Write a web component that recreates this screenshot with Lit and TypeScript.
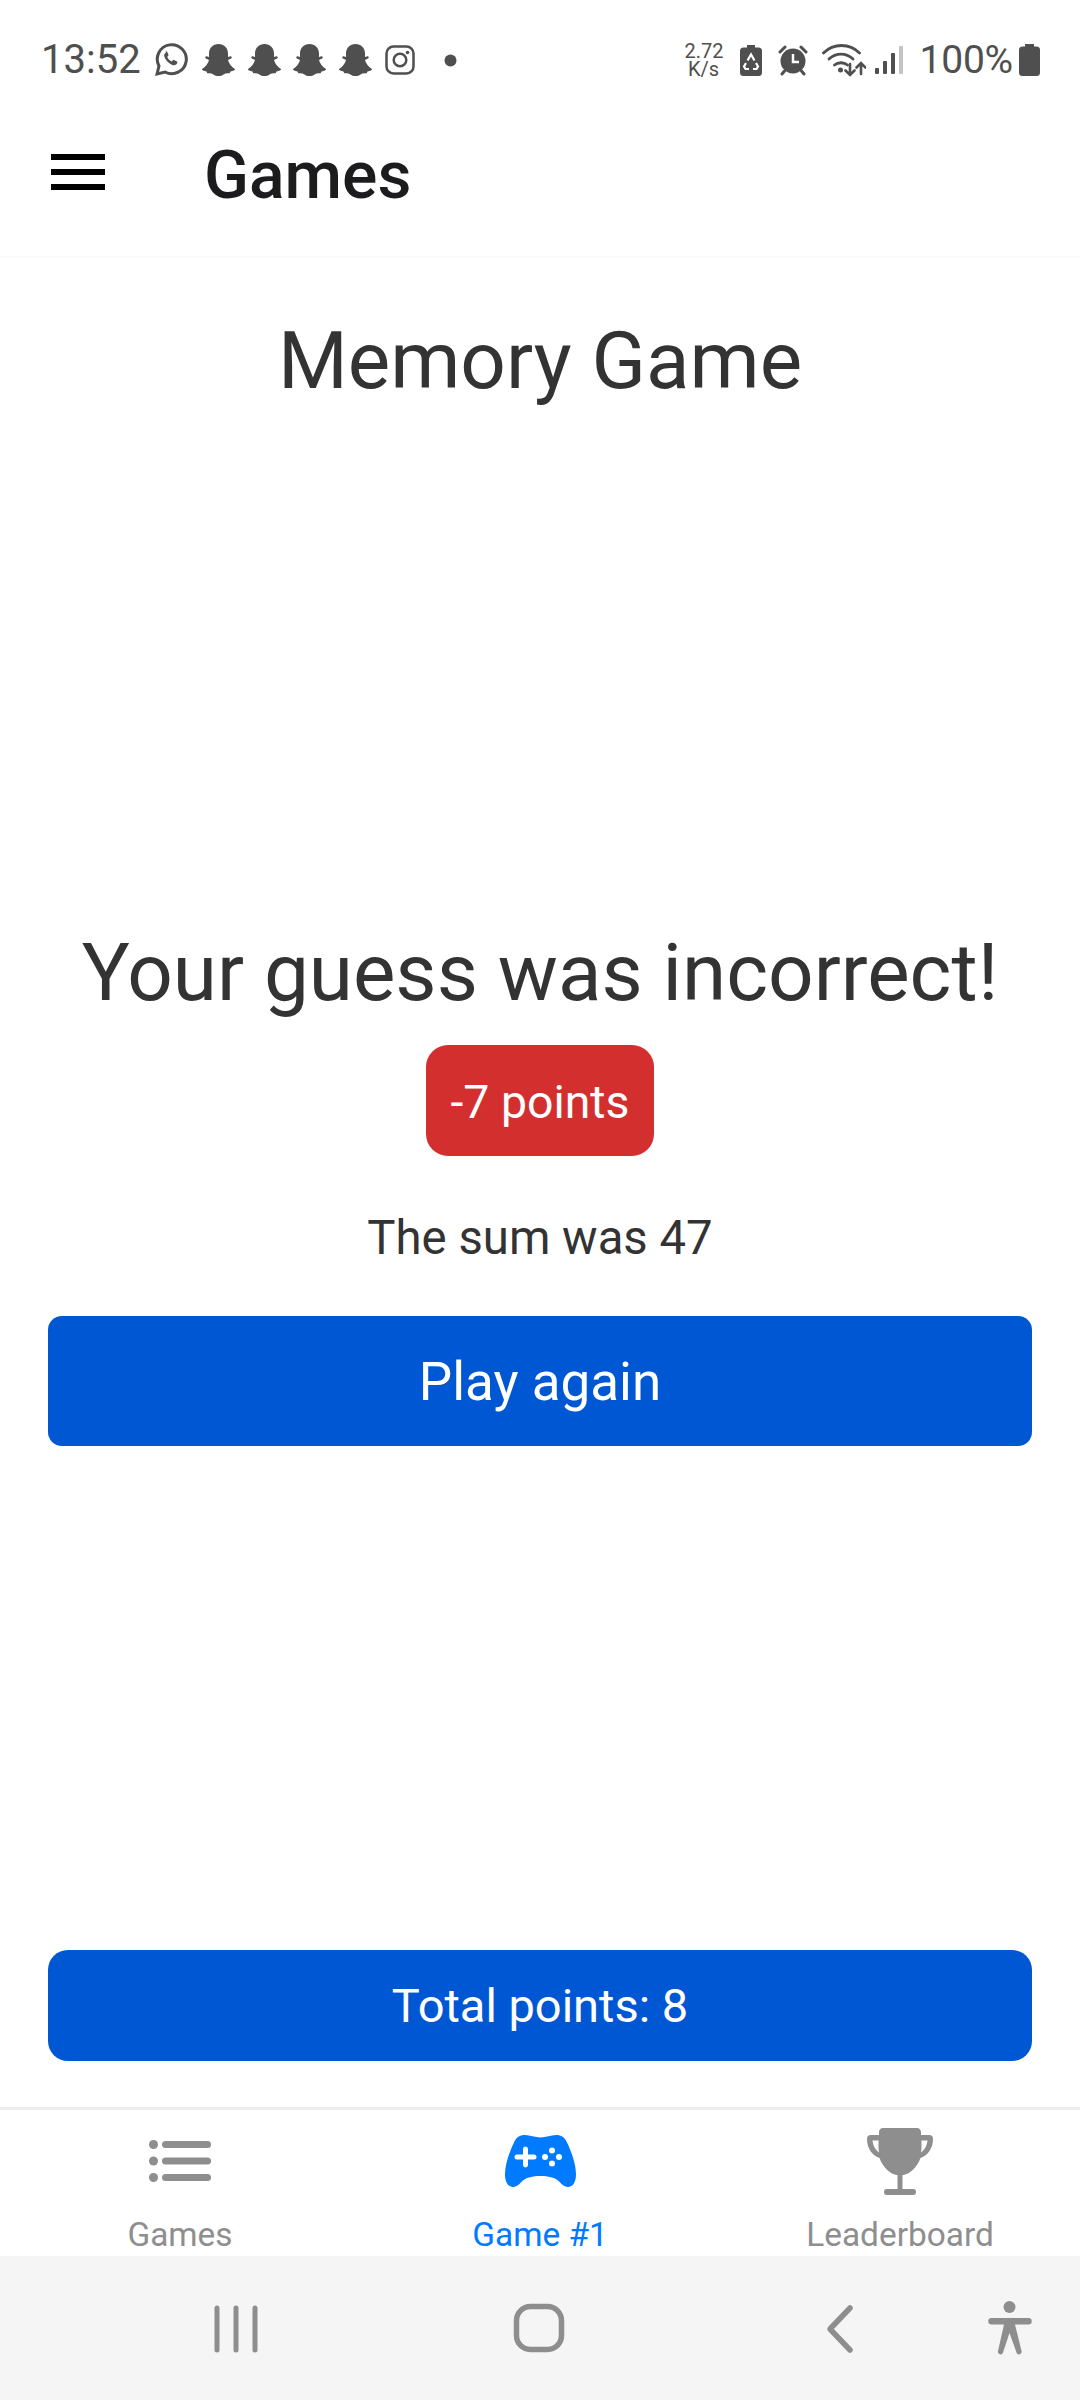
import { LitElement, html, css, svg } from 'lit'
import { customElement } from 'lit/decorators.js'

const ghost = svg`<path d="M16.500 0c5.500 0 9.500 4 9.500 9.500V13l2.500-.8c1.200 0 1.800 1.600.6 2.300L26 16c.8 3.500 3.500 7 7 9 .3.800-.5 1.500-4.500 2.500-.5 1.500-1 2-2 1.800-1.500-.2-3.500.2-5 1.200-1.700 1.100-2.500 1.500-5 1.500s-3.300-.4-5-1.500c-1.500-1-3.500-1.400-5-1.200-1 .2-1.500-.3-2-1.800C.5 26.500-.3 25.800 0 25c3.500-2 6.200-5.500 7-9l-3.100-1.500c-1.200-.7-.6-2.300.6-2.300L7 13V9.500C7 4 11 0 16.500 0z"/>`

@customElement('status-bar')
class StatusBar extends LitElement {
  static styles = css`
    :host {
      display: flex;
      align-items: center;
      height: 120px;
      padding: 0 40px 0 41px;
      color: #4f4f4f;
      font-family: Roboto, sans-serif;
    }
    svg { display: block; flex: none; fill: #4f4f4f; }
    .time { font-size: 40px; line-height: 80px; width: 99px; margin-right: 14px; white-space: nowrap; }
    .ghost { margin-right: 12.500px; }
    .speed { font-size: 20px; line-height: 18px; width: 38px; text-align: center; margin-left: auto; margin-right: 18px; }
    .pct { font-size: 39px; line-height: 80px; margin-right: 6px; letter-spacing: -.2px; }
  `
  render() {
    return html`
      <span class="time">13:52</span>
      <svg width="34" height="34" viewBox="0 0 34 34" style="margin-right:14px">
        <path fill="none" stroke="#4f4f4f" stroke-width="3" d="M3 31l2-8A14.500 14.500 0 1 1 11 29z"/>
        <path d="M12 9.500c-1.500.8-2.200 2.600-1.500 4.600 1.300 3.500 4.300 6.500 7.800 7.800 2 .6 3.900 0 4.700-1.500.5-.9.400-1.700 0-2l-3-1.500c-.5-.2-.9 0-1.200.4l-1 1.200c-2-.8-3.700-2.500-4.600-4.500l1-1.200c.3-.4.400-.7.200-1.200l-1.300-2.800c-.3-.5-1-.7-1.500-.3z"/>
      </svg>
      ${[0, 1, 2, 3].map(() => html`<svg class="ghost" width="33" height="33" viewBox="0 0 33 33">${ghost}</svg>`)}
      <svg width="30" height="30" viewBox="0 0 30 30" style="margin-left:1px">
        <rect x="1.500" y="1.500" width="27" height="27" rx="7" fill="none" stroke="#4f4f4f" stroke-width="2.500"/>
        <circle cx="15" cy="15" r="6.300" fill="none" stroke="#4f4f4f" stroke-width="2.500"/>
        <circle cx="22.500" cy="7.500" r="1.800"/>
      </svg>
      <svg width="13" height="13" viewBox="0 0 13 13" style="margin-left:29px"><circle cx="6.500" cy="6.500" r="6"/></svg>
      <span class="speed">2.72<br>K/s</span>
      <svg width="22" height="31" viewBox="0 0 22 31" style="margin-right:16px">
        <path d="M7 0h8v2.500h3.500A3.500 3.500 0 0 1 22 6v21.500a3.500 3.500 0 0 1-3.500 3.500h-15A3.500 3.500 0 0 1 0 27.500V6a3.500 3.500 0 0 1 3.500-3.500H7z"/>
        <path fill="none" stroke="#fff" stroke-width="2.200" d="M7.500 15.500l3.500-6 3.500 6M6 18l-2 3.500 1.500 2.500H9M16 18l2 3.500-1.500 2.500H13"/>
      </svg>
      <svg width="30" height="32" viewBox="0 0 30 32" style="margin-right:14px">
        <circle cx="15" cy="17" r="12.500"/>
        <path fill="none" stroke="#4f4f4f" stroke-width="3" stroke-linecap="round" d="M2 8l5-5M28 8l-5-5M6.500 27l-2.500 3M23.500 27l2.500 3"/>
        <path fill="none" stroke="#fff" stroke-width="2.500" d="M15 10v8h6"/>
      </svg>
      <svg width="44" height="35" viewBox="0 0 44 35" style="margin-right:9px">
        <g fill="none" stroke="#4f4f4f" stroke-width="2.800" stroke-linecap="round">
          <path d="M1.500 10c10-10 26-10 36 0"/>
          <path d="M7 16c7-6.500 17-6.500 24 0"/>
          <path d="M12.500 22c3.500-3 9.500-3 13 0"/>
          <path d="M28 21v11M23.500 27.500l4.500 4.500 4.500-4.500M39 31V20M34.500 24.500l4.500-4.500 4.500 4.500" stroke-width="2.600"/>
        </g>
        <circle cx="18.500" cy="27" r="2.500"/>
      </svg>
      <svg width="28" height="28" viewBox="0 0 28 28" style="margin-right:16px">
        <rect x="0" y="22" width="4" height="6" rx="1"/>
        <rect x="8" y="15" width="4" height="13" rx="1"/>
        <rect x="16" y="7" width="4" height="21" rx="1"/>
        <rect x="24" y="0" width="4" height="28" rx="1" fill="#c4c4c4"/>
      </svg>
      <span class="pct">100%</span>
      <svg width="21" height="32" viewBox="0 0 21 32">
        <path d="M6 0h9v2.500h2.500A3.500 3.500 0 0 1 21 6v22.500a3.500 3.500 0 0 1-3.500 3.500h-14A3.500 3.500 0 0 1 0 28.500V6a3.500 3.500 0 0 1 3.500-3.500H6z"/>
      </svg>
    `
  }
}

@customElement('app-header')
class AppHeader extends LitElement {
  static styles = css`
    :host {
      display: flex;
      align-items: center;
      height: 138px;
      padding-left: 51px;
      box-sizing: border-box;
      border-bottom: 2px solid #fafafa;
    }
    .burger { display: flex; flex-direction: column; gap: 9px; width: 54px; margin-right: 99px; margin-top: -32px; }
    .burger i { display: block; height: 6px; background: #000; }
    .title { font: 500 66px/76px Roboto, sans-serif; color: #1c1c1e; margin-top: -24px; }
  `
  render() {
    return html`
      <div class="burger"><i></i><i></i><i></i></div>
      <div class="title">Games</div>
    `
  }
}

@customElement('game-screen')
class GameScreen extends LitElement {
  static styles = css`
    :host {
      display: flex;
      flex-direction: column;
      flex: 1;
      padding: 0 48px;
      font-family: Roboto, sans-serif;
      color: #333;
      text-align: center;
    }
    h1 { margin: 58px 0 0; font-size: 80px; line-height: 90px; font-weight: 400; }
    h2 { margin: 520px 0 0; font-size: 80px; line-height: 94px; font-weight: 400; white-space: nowrap; }
    .badge {
      align-self: center;
      margin-top: 25px;
      width: 228px;
      height: 111px;
      border-radius: 22px;
      background: #d32f2f;
      color: #fff;
      font-size: 46.400px;
      line-height: 115px;
    }
    .sum { margin-top: 54px; font-size: 47.300px; line-height: 56px; }
    .btn {
      border-radius: 14px;
      background: #0057d4;
      color: #fff;
    }
    .again { margin-top: 50px; height: 130px; font-size: 53px; line-height: 132px; }
    .total { margin-top: auto; margin-bottom: 46px; height: 111px; font-size: 47px; line-height: 111px; border-radius: 20px; }
  `
  render() {
    return html`
      <h1>Memory Game</h1>
      <h2>Your guess was incorrect!</h2>
      <div class="badge">-7 points</div>
      <div class="sum">The sum was 47</div>
      <div class="btn again">Play again</div>
      <div class="btn total">Total points: 8</div>
    `
  }
}

@customElement('tab-bar')
class TabBar extends LitElement {
  static styles = css`
    :host {
      display: grid;
      grid-template-columns: repeat(3, 1fr);
      height: 149px;
      box-sizing: border-box;
      border-top: 3px solid #ececec;
      font: 400 33.400px/38px Roboto, sans-serif;
      color: #8e8e8f;
      text-align: center;
    }
    .tab { display: flex; flex-direction: column; align-items: center; }
    .icon { height: 90px; display: flex; align-items: center; justify-content: center; margin-top: 6px; margin-bottom: 10px; }
    .active { color: #007aff; }
    svg { display: block; }
  `
  render() {
    return html`
      <div class="tab">
        <div class="icon">
          <svg width="62" height="42" viewBox="0 0 62 42" fill="#8e8e8f">
            <circle cx="4.500" cy="4.500" r="4.500"/><circle cx="4.500" cy="21" r="4.500"/><circle cx="4.500" cy="37.500" r="4.500"/>
            <rect x="13" y="1" width="49" height="7" rx="3.500"/><rect x="13" y="17.500" width="49" height="7" rx="3.500"/><rect x="13" y="34" width="49" height="7" rx="3.500"/>
          </svg>
        </div>
        <span>Games</span>
      </div>
      <div class="tab active">
        <div class="icon">
          <svg width="71" height="52" viewBox="0 0 71 52">
            <path fill="#007aff" d="M20 0c5 0 10 2.500 15.500 2.500S46 0 51 0c5.500 0 8.500 2 11 7.500 4 8.500 9 21 9 32 0 7-3 12.500-8 12.500-4.500 0-7-4-10-6.500-3.500-3-9.500-4.500-17.500-4.500S21.500 42.500 18 45.500C15 48 12.500 52 8 52c-5 0-8-5.500-8-12.500C0 28.500 5 16 9 7.500 11.500 2 14.500 0 20 0z"/>
            <path fill="#fff" d="M18 14a2.500 2.500 0 0 1 5 0v5.500h6a2.500 2.500 0 0 1 0 5h-6V30a2.500 2.500 0 0 1-5 0v-5.500h-6a2.500 2.500 0 0 1 0-5h6z"/>
            <circle fill="#fff" cx="47" cy="15.500" r="3"/><circle fill="#fff" cx="47" cy="28.500" r="3"/><circle fill="#fff" cx="40" cy="22" r="3"/><circle fill="#fff" cx="54" cy="22" r="3"/>
          </svg>
        </div>
        <span>Game #1</span>
      </div>
      <div class="tab">
        <div class="icon">
          <svg width="66" height="67" viewBox="0 0 66 67">
            <path fill="#8e8e8f" fill-rule="evenodd" d="M16 0h34c2.300 0 4 1.700 4 4v3h8a4 4 0 0 1 4 4c0 9-5 16.500-12.500 19C50 39.500 43 46 35.500 47.300V61H46a3 3 0 0 1 0 6H20a3 3 0 0 1 0-6h10.500V47.300C23 46 16 39.500 12.500 30 5 27.500 0 20 0 11a4 4 0 0 1 4-4h8V4c0-2.300 1.700-4 4-4zM5.500 12.500c.5 5 2.800 9.500 6.500 12-.3-2-.5-4-.5-6v-6zm55 0h-6v6c0 2-.2 4-.5 6 3.700-2.500 6-7 6.500-12z"/>
          </svg>
        </div>
        <span>Leaderboard</span>
      </div>
    `
  }
}

@customElement('nav-bar')
class NavBar extends LitElement {
  static styles = css`
    :host { display: block; height: 144px; background: #f5f5f5; }
    svg { display: block; }
  `
  render() {
    return html`
      <svg width="1080" height="144" viewBox="0 0 1080 144" fill="none" stroke="#8e8e8f" stroke-linecap="round" stroke-linejoin="round">
        <path stroke-width="5" d="M217 52v42M236 52v42M255 52v42"/>
        <rect x="516.500" y="50.500" width="45" height="43" rx="14" stroke-width="5.500"/>
        <path stroke-width="5.500" d="M850 52l-20 21 20 21"/>
        <circle cx="1009.500" cy="51" r="6" fill="#8e8e8f" stroke="none"/>
        <path fill="#8e8e8f" stroke="none" d="M991.500 62h37a3.250 3.250 0 0 1 0 6.500H1015l6.500 26.500a2.500 2.500 0 0 1-5 1.500L1009.500 77 1003 96.500a2.500 2.500 0 0 1-5-1.500l6-26.500h-12.500a3.250 3.250 0 0 1 0-6.500z"/>
      </svg>
    `
  }
}

@customElement('app-root')
export class AppRoot extends LitElement {
  static styles = css`
    :host {
      display: flex;
      flex-direction: column;
      width: 1080px;
      height: 2400px;
      background: #fff;
      overflow: hidden;
    }
  `
  render() {
    return html`
      <status-bar></status-bar>
      <app-header></app-header>
      <game-screen></game-screen>
      <tab-bar></tab-bar>
      <nav-bar></nav-bar>
    `
  }
}
